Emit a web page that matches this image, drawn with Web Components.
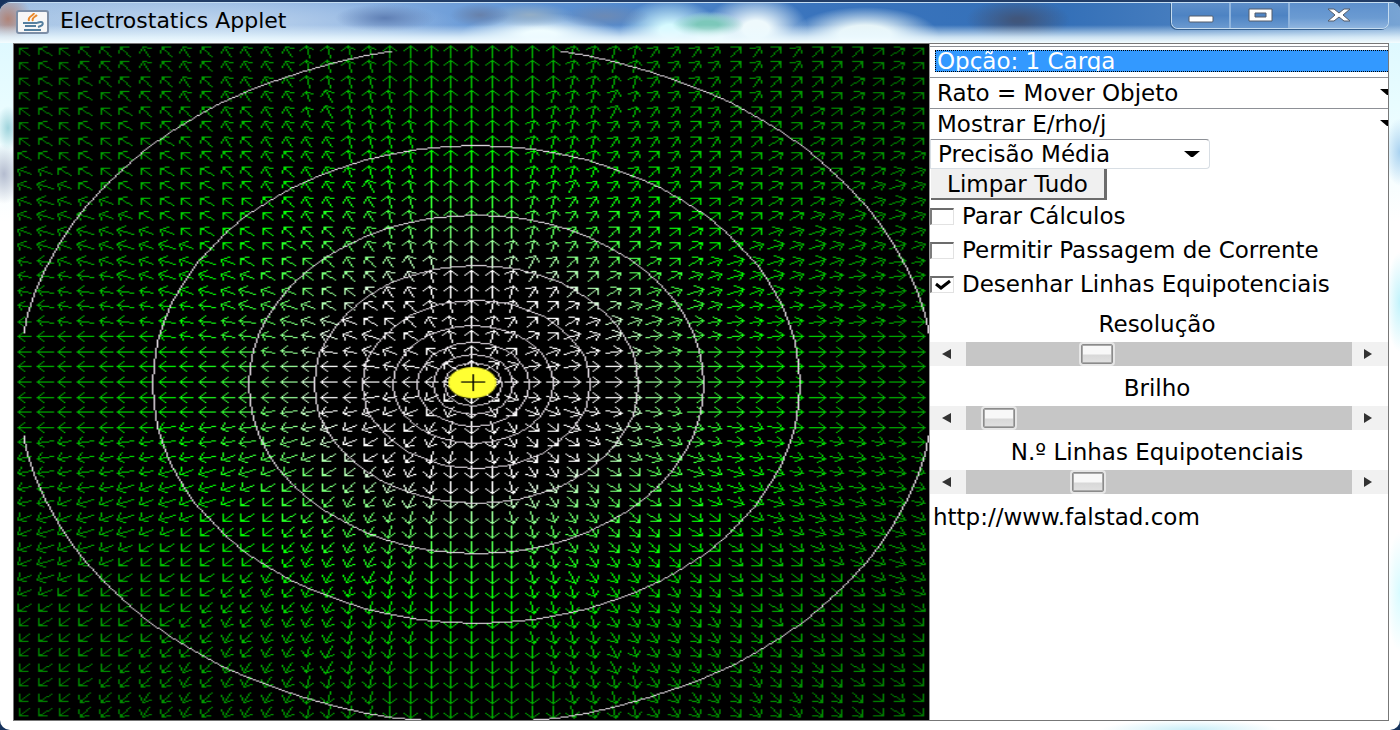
<!DOCTYPE html>
<html lang="pt">
<head>
<meta charset="utf-8">
<title>Electrostatics Applet</title>
<style>
  html, body { margin: 0; height: 100%; background: #16325c; }
  body { font-family: "DejaVu Sans", Verdana, sans-serif; color: #000; }
</style>
</head>
<body>
<applet-window>
  <title-bar slot="title">Electrostatics Applet</title-bar>
  <field-view></field-view>
  <control-panel></control-panel>
</applet-window>

<script>
const define = (name, html, setup) => {
  const template = document.createElement('template');
  template.innerHTML = html;
  customElements.define(name, class extends HTMLElement {
    constructor() {
      super();
      this.attachShadow({ mode: 'open' }).append(template.content.cloneNode(true));
    }
    connectedCallback() { if (setup) setup(this, this.shadowRoot); }
  });
};

/* Glass window frame */
define('applet-window', `
<style>
  :host { display: flex; flex-direction: column; box-sizing: border-box; min-height: 100vh;
    border-top: 2px solid #213c66; border-radius: 12px 10px 10px 10px; overflow: hidden;
    background:
      radial-gradient(ellipse 12px 22px at 8px 126px, #9fd4dc, transparent),
      radial-gradient(ellipse 18px 30px at 4px 172px, #b4bccf, transparent),
      radial-gradient(ellipse 16px 34px at 100% 150px, #a9d2f0, transparent),
      radial-gradient(ellipse 14px 50px at 100% 300px, #c2f3fb, transparent),
      radial-gradient(ellipse 14px 60px at 100% 590px, #d8fbff, transparent),
      radial-gradient(ellipse 90px 10px at 85% 100%, #c9eef8, transparent),
      linear-gradient(180deg, #dff9ff 40px, #e8fcff 100px, #fff 220px); }
  main { flex: 1; margin: 0 11px 9px 13px; border: 1px solid #777;
    display: grid; grid-template-columns: 916fr 458fr; background: #fff; }
</style>
<slot name="title"></slot>
<main><slot></slot></main>`);

define('title-bar', `
<style>
  :host { display: flex; align-items: flex-start; box-sizing: border-box; height: 41px;
    border-top: 1px solid #c4ddf2; padding: 0 11px 0 16px; font-size: 22px;
    background:
      linear-gradient(180deg, #ecfaff00 22px, #ecfaffcc 34px, #f4fdff 40px),
      radial-gradient(ellipse 24px 26px at 8px 16px, #b08478, #b0847800),
      radial-gradient(ellipse 50px 14px at 385px 15px, #5f7fb4, #5f7fb400),
      radial-gradient(ellipse 30px 12px at 480px 12px, #6781ab, #6781ab00),
      radial-gradient(ellipse 44px 12px at 530px 12px, #94aec6, #94aec600),
      radial-gradient(ellipse 44px 12px at 605px 13px, #6c8ab5, #6c8ab500),
      radial-gradient(ellipse 80px 22px at 540px 32px, #f2ffff 20%, #f2ffff00),
      radial-gradient(ellipse 36px 13px at 708px 22px, #7cc8ba 30%, #7cc8ba00),
      radial-gradient(ellipse 50px 32px at 670px 28px, #d4faff 20%, #d4faff00),
      radial-gradient(ellipse 52px 34px at 756px 26px, #eef9fc 25%, #eef9fc00),
      radial-gradient(ellipse 40px 24px at 710px 32px, #e0fbff 30%, #e0fbff00),
      radial-gradient(ellipse 74px 28px at 865px 32px, #e6f4f8 35%, #e6f4f800),
      radial-gradient(ellipse 52px 22px at 1018px 17px, #40567c 10%, #40567c00),
      radial-gradient(ellipse 260px 30px at 200px 20px, #c0d6ee, #c0d6ee00),
      linear-gradient(90deg, #9fbfe2, #8ab0e0 24%, #5e93d4 38%, #3a74bd 58%, #3470b8 76%, #4a80c0 86%, #78a4d4); }
  svg { display: block; }
  .icon { margin-top: 7px; }
  h1 { flex: 1; margin: 0 0 0 11px; font-size: inherit; font-weight: 400; line-height: 36px; }
  nav { display: flex; border: 1px solid #c5dcf0; border-top: 0; border-radius: 0 0 7px 7px;
    box-shadow: -1px 1px 0 #35608f; overflow: hidden; }
  button { box-sizing: border-box; height: 25px; padding: 0; border: 0; border-right: 2px solid #8fb4dd;
    background: linear-gradient(#5e8fca, #4d83c3 50%, #6b9ad0); display: grid; place-items: center; width: 59px; }
  button:last-child { width: 98px; border: 0; background: linear-gradient(#5d90cd, #6b9bd2 60%, #8fb5df); }
</style>
<svg class="icon" width="33" height="24" viewBox="0 0 33 24" aria-hidden="true">
  <rect x="1" y="1" width="31" height="22" rx="2" fill="#f7f7f7" stroke="#7c8ea6" stroke-width="2"/>
  <path d="M18 3c0 3-7 3-5 8M21 5c-2 2-6 3-4 6" fill="none" stroke="#ea8a2c" stroke-width="2"/>
  <path d="M7 13h14M9 16h11M8 20h17M21 13c7-3 8 2 1 4" fill="none" stroke="#557f9f" stroke-width="2"/>
</svg>
<h1><slot></slot></h1>
<nav>
  <button aria-label="Minimizar"><svg width="28" height="22"><rect x="2" y="11" width="24" height="6" rx="1" fill="#fff" stroke="#555d6b" stroke-width="1"/></svg></button>
  <button aria-label="Maximizar"><svg width="28" height="22"><path fill-rule="evenodd" d="M3 4h23v12H3zM9 8h11v4H9z" fill="#fff" stroke="#555d6b" stroke-width="1"/></svg></button>
  <button aria-label="Fechar"><svg width="28" height="22"><path d="M3 4h6l5 4 5-4h6l-7 6 7 6h-6l-5-4-5 4H3l7-6z" fill="#fff" stroke="#555d6b" stroke-width="1"/></svg></button>
</nav>`);

/* Electric field of one positive charge */
define('field-view', `
<style>
  :host { display: block; position: relative; background: #000; border-right: 1px solid #999; min-height: 400px; }
  canvas { position: absolute; inset: 0; width: 100%; height: 100%; }
</style>
<canvas width="571" height="563" role="img" aria-label="Campo elétrico"></canvas>`,
(host, root) => {
  const W = 571, H = 563, N = 45, HEAD = 4;
  const g = root.querySelector('canvas').getContext('2d');
  const line = (x0, y0, x1, y1, minX = 0, minY = 0) => {
    const dx = Math.abs(x1 - x0), dy = -Math.abs(y1 - y0);
    const sx = x0 < x1 ? 1 : -1, sy = y0 < y1 ? 1 : -1;
    let err = dx + dy;
    for (;;) {
      if (x0 >= minX && y0 >= minY) g.fillRect(x0, y0, 1, 1);
      if (x0 === x1 && y0 === y1) break;
      const e = 2 * err;
      if (e >= dy) { err += dy; x0 += sx; }
      if (e <= dx) { err += dx; y0 += sy; }
    }
  };
  g.fillStyle = '#000';
  g.fillRect(0, 0, W, H);

  const mid = (N - 1) / 2;
  for (let j = 0; j < N; j++) for (let i = 0; i < N; i++) {
    const vx = i - mid, vy = j - mid, r = Math.hypot(vx, vy);
    if (!r) continue;
    const level = Math.min(510, Math.round(3700 / r));
    const green = Math.min(255, level), rest = Math.max(0, level - 255);
    g.fillStyle = `rgb(${rest},${green},${rest})`;
    const cx = Math.floor((i + .5) * W / N), cy = Math.floor((j + .5) * H / N);
    const hx = Math.trunc(vx / r * (i % 2 ? 5.9 : 4.9)), hy = Math.trunc(vy / r * 5.4);
    const x2 = cx + hx, y2 = cy + hy;
    line(cx - hx, cy - hy, x2, y2);
    const len = Math.hypot(hx, hy) || 1, ux = hx / len * HEAD, uy = hy / len * HEAD;
    line(x2, y2, Math.trunc(x2 + uy - ux), Math.trunc(y2 - ux - uy));
    line(x2, y2, Math.trunc(x2 - uy - ux), Math.trunc(y2 + ux - uy));
  }

  g.fillStyle = '#d8d0d8';
  const rings = [[286, 282, 90], [202, 199, 72], [142, 141, 60], [101, 99, 48],
                 [71, 70, 40], [50, 49, 32], [35, 35, 24], [25, 25, 16], [18, 18, 12]];
  for (const [rx, ry, n] of rings) {
    const ox = rx > 60 ? 288 : 286, oy = 283;
    for (let k = 0; k < n; k++) {
      const p = [k, k + 1].map(s => {
        const a = s / n * Math.PI * 2;
        return [Math.round(ox + rx * Math.cos(a)), Math.round(oy + ry * Math.sin(a))];
      });
      line(...p[0], ...p[1], 6, 6);
    }
  }

  g.fillStyle = '#ffff32';
  g.beginPath();
  g.ellipse(286, 282, 15, 13, 0, 0, Math.PI * 2);
  g.fill();
  g.fillStyle = '#000';
  g.fillRect(279, 281, 15, 1);
  g.fillRect(286, 275, 1, 14);
});

/* Drop-down; "wide" boxes run past the panel's edge */
define('choice-box', `
<style>
  :host { display: flex; box-sizing: border-box; height: 31px; position: relative; overflow: hidden;
    border-top: 1px solid #8d9096; }
  select { appearance: none; flex: 1; min-width: 0; box-sizing: border-box; border: 0; margin: 0; padding: 0 0 0 7px;
    font: inherit; line-height: 26px; color: inherit; background: transparent; outline: 0; border-radius: 0; }
  svg { position: absolute; right: 9px; top: 11px; pointer-events: none; }
  :host([wide]) svg { right: -8px; }
  :host([short]) { width: 280px; height: 30px; border: 1px solid #d8dee4; border-top-color: #8d9096; border-radius: 0 4px 4px 0; }
  :host([active]) svg { display: none; }
  :host([active]) select { margin: 3px 0 5px 5px; padding-left: 1px; line-height: 20px; color: #fff; background: #39f; border: 1px dotted #000; border-right: 0; }
</style>
<select><option></option></select>
<svg width="16" height="7"><path d="M0 0h16l-7 6H7z"/></svg>`,
(host, root) => {
  root.querySelector('option').textContent = host.getAttribute('text');
  root.querySelector('select').setAttribute('aria-label', host.getAttribute('text'));
});

define('check-row', `
<style>
  :host { display: block; height: 34px; }
  label { display: flex; align-items: center; height: 32px; gap: 8px; white-space: nowrap; }
  input { appearance: none; flex: none; margin: 0; width: 24px; height: 17px; background: #fff;
    border: 1px solid #e2e2e2; border-top: 2px solid #6c6c6c; border-left: 2px solid #7c7c7c; display: grid; place-items: center; }
  input:checked { background: #fff url("data:image/svg+xml,%3Csvg xmlns='http://www.w3.org/2000/svg' width='18' height='12'%3E%3Cpath d='M2 5l5 4 9-7' fill='none' stroke='%23000' stroke-width='3'/%3E%3C/svg%3E") center no-repeat; }
</style>
<label><input type="checkbox"><span><slot></slot></span></label>`,
(host, root) => { root.querySelector('input').checked = host.hasAttribute('checked'); });

define('scroll-row', `
<style>
  :host { display: block; padding-bottom: 5px; }
  label { display: block; text-align: center; height: 35px; line-height: 34px; padding-right: 4px; }
  div { display: flex; height: 24px; }
  button { flex: none; width: 36px; border: 0; padding: 0 4px 0 0; background: #f1f1f1; display: grid; place-items: center; }
  input { appearance: none; flex: 1; min-width: 0; height: 24px; margin: 0; background: #c6c6c6; overflow: hidden; }
  input::-webkit-slider-thumb { appearance: none; box-sizing: border-box; width: 36px; height: 24px; border-radius: 4px;
    border: 2px solid #e6e6e6; box-shadow: inset 0 0 0 1px #8b8b8b, inset 0 0 0 2px #aaa;
    background: linear-gradient(#f8f8f8 50%, #d8d8d8 55%, #e2e2e2); }
</style>
<label for="range"><slot></slot></label>
<div>
  <button aria-label="Diminuir"><svg width="10" height="12"><path d="M10 1v10L1 6z" fill="#333"/></svg></button>
  <input id="range" type="range" min="0" max="350">
  <button aria-label="Aumentar"><svg width="10" height="12"><path d="M1 1v10l8-5z" fill="#333"/></svg></button>
</div>`,
(host, root) => { root.querySelector('input').value = host.getAttribute('value'); });

define('control-panel', `
<style>
  :host { display: block; min-width: 0; overflow: hidden; background: #fff; padding-top: 2px; font-size: 23px; }
  .clear { display: block; box-sizing: border-box; height: 31px; width: 176px; margin: 0 0 0 1px; padding: 0; font: inherit; line-height: 28px;
    color: inherit; background: #f0f0f0; border: 0; border-right: 3px solid #6c6c6c; border-bottom: 2px solid #6c6c6c; }
  .sliders { padding-top: 5px; }
  a { display: block; padding-left: 3px; line-height: 36px; color: inherit; text-decoration: none; }
</style>
<choice-box wide active text="Opção: 1 Carga"></choice-box>
<choice-box wide text="Rato = Mover Objeto"></choice-box>
<choice-box wide text="Mostrar E/rho/j"></choice-box>
<choice-box short text="Precisão Média"></choice-box>
<button class="clear">Limpar Tudo</button>
<check-row>Parar Cálculos</check-row>
<check-row>Permitir Passagem de Corrente</check-row>
<check-row checked>Desenhar Linhas Equipotenciais</check-row>
<div class="sliders">
  <scroll-row value="113">Resolução</scroll-row>
  <scroll-row value="15">Brilho</scroll-row>
  <scroll-row value="104">N.º Linhas Equipotenciais</scroll-row>
</div>
<a href="http://www.falstad.com">http://www.falstad.com</a>`);
</script>
</body>
</html>
